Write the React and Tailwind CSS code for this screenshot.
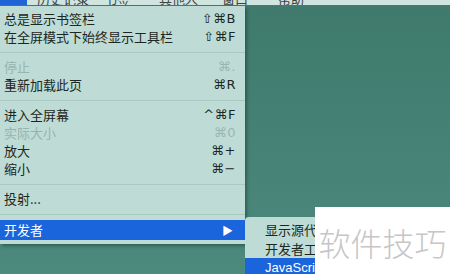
import React from 'react';

const menubar = [
  { label: '显示', x: 'w-[27px]', active: true },
  { label: '历史记录', x: 'ml-[10px]' },
  { label: '书签', x: 'ml-[15px]' },
  { label: '其他人', x: 'ml-[29px]' },
  { label: '窗口', x: 'ml-[24px]' },
  { label: '帮助', x: 'ml-[30px]' },
];

const items = [
  { label: '总是显示书签栏', key: '⇧⌘B' },
  { label: '在全屏模式下始终显示工具栏', key: '⇧⌘F' },
  { sep: true },
  { label: '停止', key: '⌘.', disabled: true },
  { label: '重新加载此页', key: '⌘R' },
  { sep: true },
  { label: '进入全屏幕', key: '^⌘F' },
  { label: '实际大小', key: '⌘0', disabled: true },
  { label: '放大', key: '⌘+' },
  { label: '缩小', key: '⌘−' },
  { sep: true },
  { label: '投射...' },
  { sep: true },
];

const App = () => {
  return (
    <div className="relative w-[450px] h-[274px] overflow-hidden bg-gradient-to-b from-[#3f7a6c] to-[#4c8a7d] text-[#1c2623] font-['Noto_Sans_CJK_SC','Noto_Sans',sans-serif]">
      {/* menubar, only the lower edge shows */}
      <div className="h-[6px] bg-[#d0e4e0] border-b border-[#5c7069] flex overflow-hidden text-[13px] leading-[13px]">
        {menubar.map((m) => (
          <div
            key={m.label}
            className={`${m.x} h-[5px] shrink-0 flex items-end justify-center overflow-hidden ${m.active ? 'bg-[#1f63d6] text-white' : ''}`}
          >
            <span className="block h-[13px] shrink-0 text-[#39433f]">{m.active ? '' : m.label}</span>
          </div>
        ))}
      </div>

      {/* main menu */}
      <div className="w-[245px] bg-[#bedcd5] pt-[4px] pb-[4px] shadow-[2px_2px_3px_rgba(20,50,45,0.45)] text-[13px]">
        {items.map((it, i) =>
          it.sep ? (
            <div key={i} className="h-[12px] flex items-center">
              <div className="w-full h-[1px] bg-[#a9c9c2]" />
            </div>
          ) : (
            <div key={i} className="h-[18px] flex items-center justify-between pl-[4px] pr-[9px]">
              <span className={it.disabled ? 'text-[#97b3ad]' : ''}>{it.label}</span>
              {it.key && (
                <span className={`font-['DejaVu_Sans',sans-serif] text-[13px] tracking-[0.5px] ${it.disabled ? 'text-[#9ab6b0]' : ''}`}>
                  {it.key}
                </span>
              )}
            </div>
          )
        )}
        <div className="h-[20px] flex items-center justify-between pl-[4px] pr-[12px] bg-[#1a65db] text-white">
          <span>开发者</span>
          <span className="text-[11px] leading-none">▶</span>
        </div>
      </div>

      {/* submenu */}
      <div className="absolute left-[245px] top-[217px] w-[120px] h-[60px] bg-[#bedcd5] rounded-tl-[4px] pt-[3px] text-[13px]">
        <div className="h-[19px] flex items-center pl-[20px]">显示源代码</div>
        <div className="h-[19px] flex items-center pl-[20px]">开发者工具</div>
        <div className="h-[19px] flex items-center pl-[20px] bg-[#1a65db] text-white font-['Liberation_Sans',sans-serif]">JavaScript控制台</div>
      </div>

      {/* watermark */}
      <div className="absolute left-[315px] top-[207px] w-[135px] h-[67px] bg-white flex items-center justify-center">
        <span className="text-[32px] font-light text-[#c6c6c6] leading-none mt-[2px]">软件技巧</span>
      </div>
    </div>
  );
};

export default App;
